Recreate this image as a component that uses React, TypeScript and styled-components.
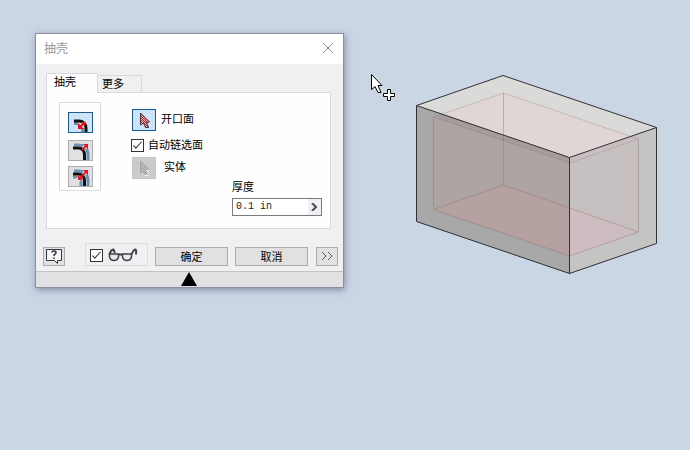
import React, { useState } from "react";
import styled, { createGlobalStyle, css } from "styled-components";

const Global = createGlobalStyle`
  *, *::before, *::after { box-sizing: border-box; }
  html, body, #root { min-height: 100vh; }
  body {
    margin: 0;
    background: #cbd6e5;
    color: #000;
    font: 11px/16px "Liberation Sans", "Noto Sans CJK SC", sans-serif;
  }
  button, input { font: inherit; color: inherit; }
`;

const Page = styled.main`
  display: flex;
  align-items: flex-start;
  min-height: 100vh;
  padding: 33px 32px 33px 35px;
`;

const Dialog = styled.section`
  flex: 0 0 auto;
  width: 309px;
  background: #f0f0f3;
  border: 1px solid #8d8d9d;
  box-shadow: 1px 2px 7px rgba(60, 70, 105, 0.5);
`;

const TitleBar = styled.header`
  display: flex;
  align-items: center;
  justify-content: space-between;
  height: 30px;
  padding: 0 8px;
  background: #fff;
`;

const Title = styled.h1`
  margin: 0;
  font-size: 12px;
  line-height: 18px;
  font-weight: 400;
  color: #96969c;
`;

const CloseButton = styled.button`
  display: flex;
  padding: 0;
  border: 0;
  background: none;
`;

const Body = styled.div`
  padding: 9px 12px 0 10px;
`;

const TabList = styled.div`
  display: flex;
  align-items: flex-end;
`;

const Tab = styled.button<{ $active?: boolean }>`
  flex: 0 0 auto;
  border: 1px solid #dadada;
  border-bottom: 0;
  text-align: left;
  line-height: 16px;
  ${(p) =>
    p.$active
      ? css`
          width: 52px;
          height: 20px;
          padding: 0 7px 3px;
          margin-bottom: -1px;
          background: #fefefe;
          z-index: 1;
        `
      : css`
          width: 44px;
          height: 17px;
          padding: 0 4px;
          border-left: 0;
          background: #f0f0f0;
        `}
`;

const TabPanel = styled.div`
  display: grid;
  grid-template-columns: 42px 1fr;
  column-gap: 31px;
  height: 137px;
  padding: 9px 8px 12px 12px;
  background: #fefefe;
  border: 1px solid #dadada;
`;

const DirectionGroup = styled.div`
  display: flex;
  flex-direction: column;
  align-items: center;
  gap: 5px;
  height: 89px;
  padding-top: 9px;
  border: 1px solid #dcdcde;
`;

const DirectionButton = styled.button<{ $on?: boolean }>`
  display: flex;
  width: 25px;
  height: 21px;
  padding: 0;
  border: 1px solid ${(p) => (p.$on ? "#1f5a8c" : "#adadad")};
  background: ${(p) => (p.$on ? "#cce4f7" : "#e1e1e3")};
  &:first-child { margin-bottom: 2px; }
`;

const Fields = styled.div`
  display: flex;
  flex-direction: column;
  padding-top: 7px;
`;

const PickRow = styled.div<{ $gap: number }>`
  display: flex;
  align-items: center;
  gap: ${(p) => p.$gap}px;
  height: 22px;
`;

const PickButton = styled.button<{ $on?: boolean }>`
  display: flex;
  width: 24px;
  height: 22px;
  padding: 0;
  border: 1px solid ${(p) => (p.$on ? "#1f5a8c" : "#c6c6c6")};
  background: ${(p) => (p.$on ? "#cce4f7" : "#cbcbcb")};
`;

const Label = styled.label`
  padding-bottom: 2px;
  white-space: nowrap;
`;

const CheckLabel = styled.label`
  display: flex;
  align-items: center;
  gap: 4px;
  height: 26px;
  padding-top: 2px;
  margin-left: -1px;
  white-space: nowrap;
`;

const CheckBox = styled.input.attrs({ type: "checkbox" })`
  appearance: none;
  display: grid;
  place-items: center;
  flex: none;
  width: 13px;
  height: 13px;
  margin: 0;
  border: 1px solid #333;
  background: #fff;
  &:checked::after {
    content: "";
    width: 9px;
    height: 4px;
    margin-top: -3px;
    border: solid #333;
    border-width: 0 0 1px 1px;
    transform: rotate(-47deg);
  }
`;

const Thickness = styled.div`
  display: flex;
  flex-direction: column;
  align-self: flex-end;
  gap: 1px;
  width: 90px;
`;

const ValueBox = styled.div`
  display: flex;
  height: 18px;
  border: 1px solid #7a7a7a;
  background: #fff;
`;

const ValueInput = styled.input`
  flex: 1;
  min-width: 0;
  padding: 0 3px;
  border: 0;
  background: none;
  color: #222;
  font-family: "Liberation Mono", monospace;
  font-size: 10px;
`;

const ValueMenu = styled.button`
  display: grid;
  place-items: center;
  width: 13px;
  padding: 0;
  border: 0;
  background: #f0f0f4;
`;

const Actions = styled.div`
  display: flex;
  align-items: flex-end;
  gap: 7px;
  padding: 14px 5px 5px 7px;
`;

const ActionButton = styled.button<{ $small?: boolean }>`
  display: grid;
  place-items: center;
  flex: ${(p) => (p.$small ? "0 0 22px" : "1 1 0")};
  height: 19px;
  padding: 0;
  border: 1px solid #adadad;
  background: #e1e1e1;
  &:last-child { margin-left: 1px; }
`;

const PreviewBox = styled.label`
  display: flex;
  align-items: center;
  gap: 5px;
  flex: 0 0 63px;
  height: 23px;
  margin-left: 13px;
  padding: 1px 4px 0;
  border: 1px solid #dcdcdc;
`;

const Footer = styled.footer`
  display: flex;
  justify-content: center;
  height: 16px;
  padding-right: 2px;
  border-top: 1px solid #c2c2c4;
  background: #e1e1e3;
`;

const CollapseButton = styled.button`
  display: flex;
  padding: 0;
  border: 0;
  background: none;
`;

const Viewport = styled.div`
  position: relative;
  flex: 1 0 260px;
  padding: 40px 0 0 71px;
`;

const Pointer = styled.svg`
  position: absolute;
  left: 26px;
  top: 40px;
`;

const Drawing = styled.svg`
  display: block;
`;

/* Curved shell wall with arrows showing the side on which thickness is added. */
function ShellIcon({ side }: { side: "inside" | "outside" | "both" }) {
  if (side === "inside") {
    return (
      <Drawing width="23" height="19" viewBox="0 0 23 19" aria-hidden="true" fill="none">
        <path d="M5 10.500h4M13.500 15v4" stroke="#6d91b5" strokeWidth="3" />
        <path d="M5 8h5c4 0 7 3 7 7v4" stroke="#111" strokeWidth="3" />
        <path d="M9 10v6h6z" fill="#e8121a" />
        <path d="M11 14l4-4" stroke="#e8121a" strokeWidth="2" />
        <path d="M12 9h4v4z" fill="#e8121a" />
      </Drawing>
    );
  }
  return (
    <Drawing width="23" height="19" viewBox="0 0 23 19" aria-hidden="true" fill="none">
      <path d="M5 4h5c5 0 9 4 9 9v6" stroke="#6d91b5" strokeWidth="3" />
      {side === "both" && (
        <path d="M4 10h3c3 0 5 2 5 5v4" stroke="#6d91b5" strokeWidth="3" />
      )}
      <path d="M4 7h5c4 0 6.500 3 6.500 7v5" stroke="#111" strokeWidth="3" />
      {side === "outside" ? (
        <g>
          <path d="M15 7l3-3" stroke="#fff" strokeWidth="4" />
          <path d="M13 9l5-5" stroke="#e8121a" strokeWidth="2" />
          <path d="M14 3h5v5z" fill="#e8121a" />
        </g>
      ) : (
        <g>
          <path d="M15 7l3-3M9 13l2-2" stroke="#fff" strokeWidth="4" />
          <path d="M10 12l8-8" stroke="#e8121a" strokeWidth="2" />
          <path d="M14 3h5v5zM9 8v5h5z" fill="#e8121a" />
        </g>
      )}
    </Drawing>
  );
}

function PickIcon({ disabled }: { disabled?: boolean }) {
  const line = disabled ? "#a4a4a4" : "#493238";
  const id = disabled ? "dotsOff" : "dotsOn";
  return (
    <Drawing width="22" height="20" viewBox="0 0 22 20" aria-hidden="true">
      <defs>
        <pattern id={id} width="2" height="2" patternUnits="userSpaceOnUse">
          <rect width="2" height="2" fill={disabled ? "#cfcfcf" : "#f0b4b8"} />
          <path d="M0 0h1v1h-1zM1 1h1v1h-1z" fill={disabled ? "#999" : "#b8202a"} />
        </pattern>
      </defs>
      <path d="M7.500 3v12l3-2 2 4.500h3l-2-5 3-.5z" fill={`url(#${id})`} stroke={line} />
      {disabled && <path d="M11.500 17.500h4M13.500 12.500h3M14.500 13.500l1.500 4" stroke="#f4f4f4" fill="none" />}
    </Drawing>
  );
}

function GlassesIcon() {
  return (
    <Drawing width="30" height="14" viewBox="0 0 30 14" fill="none" stroke="#3e4146" aria-hidden="true">
      <path d="M1.500 6h9v3q-1 3.500-4.500 3.500T1.500 9zM14.500 6h9v3q-1 3.500-4.500 3.500T14.500 9z" fill="#e6eaed" strokeWidth="1.500" />
      <path d="M10.500 6.500h4" strokeWidth="2" />
      <path d="M1.500 6.500q1-4.500 4-5l1.500 3.500M23.500 6.500q2-5 4-5 1 1 .5 5" strokeWidth="2" />
    </Drawing>
  );
}

function ShellModel() {
  return (
    <Drawing width="243" height="202" viewBox="415 73 243 202" role="img" aria-label="抽壳">
      <defs>
        <clipPath id="topFace"><path d="M416.500 105.500L503 75.500L656.500 127.500L569.500 157.500Z" /></clipPath>
        <clipPath id="leftFace"><path d="M416.500 105.500L569.500 157.500V273.500L416.500 221.500Z" /></clipPath>
        <clipPath id="rightFace"><path d="M569.500 157.500L656.500 127.500V243.500L569.500 273.500Z" /></clipPath>
      </defs>
      <g clipPath="url(#topFace)">
        <path d="M410 70h250v100H410z" fill="#dadad9" />
        <path d="M433.500 117L503.500 93L638.500 139V232L569.500 256L433.500 209.500Z" fill="#dfd6d5" />
      </g>
      <g clipPath="url(#leftFace)">
        <path d="M410 100h160v180H410z" fill="#a8a8a8" />
        <path d="M433.500 117L503.500 93L638.500 139V232L569.500 256L433.500 209.500Z" fill="#aea4a3" />
        <path d="M433.500 209.500L503.500 185L638.500 232L569.500 256Z" fill="#b6a1a1" />
        <path d="M433.500 117L503.500 93L638.500 139L569.500 163Z" fill="#a69c9b" />
      </g>
      <g clipPath="url(#rightFace)">
        <path d="M568 120h90v160h-90z" fill="#c4c4c2" />
        <path d="M433.500 117L503.500 93L638.500 139V232L569.500 256L433.500 209.500Z" fill="#c7c0c0" />
        <path d="M433.500 209.500L503.500 185L638.500 232L569.500 256Z" fill="#cebdc0" />
      </g>
      <g fill="none" stroke="#8d6f70" strokeOpacity=".4">
        <path d="M433.500 117L503.500 93L638.500 139L569.500 163Z" strokeOpacity=".3" />
        <path d="M433.500 209.500L503.500 185L638.500 232L569.500 256Z" />
        <path d="M433.500 117V209.500M503.500 93V185M638.500 139V232" />
      </g>
      <path
        d="M416.500 105.500L503 75.500L656.500 127.500L569.500 157.500ZM416.500 105.500V221.500L569.500 273.500L656.500 243.500V127.500M569.500 157.500V273.500"
        fill="none"
        stroke="#303034"
        strokeLinejoin="round"
      />
    </Drawing>
  );
}

export default function App() {
  const [chain, setChain] = useState(true);
  const [preview, setPreview] = useState(true);
  const [value, setValue] = useState("0.1 in");
  return (
    <>
      <Global />
      <Page>
        <Dialog role="dialog" aria-labelledby="title">
          <TitleBar>
            <Title id="title">抽壳</Title>
            <CloseButton aria-label="关闭">
              <Drawing width="14" height="14" viewBox="0 0 14 14" stroke="#8b858b">
                <path d="M2 1l10 10M12 1L2 11" />
              </Drawing>
            </CloseButton>
          </TitleBar>
          <Body>
            <TabList role="tablist">
              <Tab $active role="tab" aria-selected="true">抽壳</Tab>
              <Tab role="tab" aria-selected="false">更多</Tab>
            </TabList>
            <TabPanel role="tabpanel">
              <DirectionGroup>
                <DirectionButton $on aria-label="向内"><ShellIcon side="inside" /></DirectionButton>
                <DirectionButton aria-label="向外"><ShellIcon side="outside" /></DirectionButton>
                <DirectionButton aria-label="双向"><ShellIcon side="both" /></DirectionButton>
              </DirectionGroup>
              <Fields>
                <PickRow $gap={5}>
                  <PickButton $on id="faces"><PickIcon /></PickButton>
                  <Label htmlFor="faces">开口面</Label>
                </PickRow>
                <CheckLabel>
                  <CheckBox checked={chain} onChange={(e) => setChain(e.target.checked)} />
                  自动链选面
                </CheckLabel>
                <PickRow $gap={8}>
                  <PickButton disabled id="solid"><PickIcon disabled /></PickButton>
                  <Label htmlFor="solid">实体</Label>
                </PickRow>
                <Thickness>
                  <Label htmlFor="thickness">厚度</Label>
                  <ValueBox>
                    <ValueInput id="thickness" value={value} onChange={(e) => setValue(e.target.value)} />
                    <ValueMenu aria-label="厚度选项">
                      <Drawing width="9" height="8" viewBox="0 0 9 8" fill="none" stroke="#4a4a50" strokeWidth="2">
                        <path d="M2 0l4 4-4 4" />
                      </Drawing>
                    </ValueMenu>
                  </ValueBox>
                </Thickness>
              </Fields>
            </TabPanel>
          </Body>
          <Actions>
            <ActionButton $small aria-label="帮助">
              <Drawing width="18" height="17" viewBox="0 0 18 17" fill="none" stroke="#34363c">
                <path d="M1.500 1.500h15v11h-4v3l-3-3h-8z" fill="#f5f6f8" />
                <path d="M7 4.500q0-1.500 2-1.500t2 1.500q0 1-1 1.500-1 .5-1 2M9 9.500v1.500" strokeWidth="1.500" />
              </Drawing>
            </ActionButton>
            <PreviewBox aria-label="预览">
              <CheckBox checked={preview} onChange={(e) => setPreview(e.target.checked)} />
              <GlassesIcon />
            </PreviewBox>
            <ActionButton>确定</ActionButton>
            <ActionButton>取消</ActionButton>
            <ActionButton $small aria-label="展开">
              <Drawing width="14" height="12" viewBox="0 0 14 12" fill="none" stroke="#505866">
                <path d="M2 1l4 4-4 4M8 1l4 4-4 4" />
              </Drawing>
            </ActionButton>
          </Actions>
          <Footer>
            <CollapseButton aria-label="收起">
              <Drawing width="16" height="14" viewBox="0 0 16 14"><path d="M8 0l8 14H0z" /></Drawing>
            </CollapseButton>
          </Footer>
        </Dialog>
        <Viewport>
          <ShellModel />
          <Pointer width="26" height="30" viewBox="0 0 26 30" fill="#fff" stroke="#000" aria-hidden="true">
            <path d="M1.500 1.500v15l3.500-3 3 6h3l-3-7h4z" />
            <path d="M17.500 16.500h3v4h4v3h-4v4h-3v-4h-4v-3h4z" />
          </Pointer>
        </Viewport>
      </Page>
    </>
  );
}
